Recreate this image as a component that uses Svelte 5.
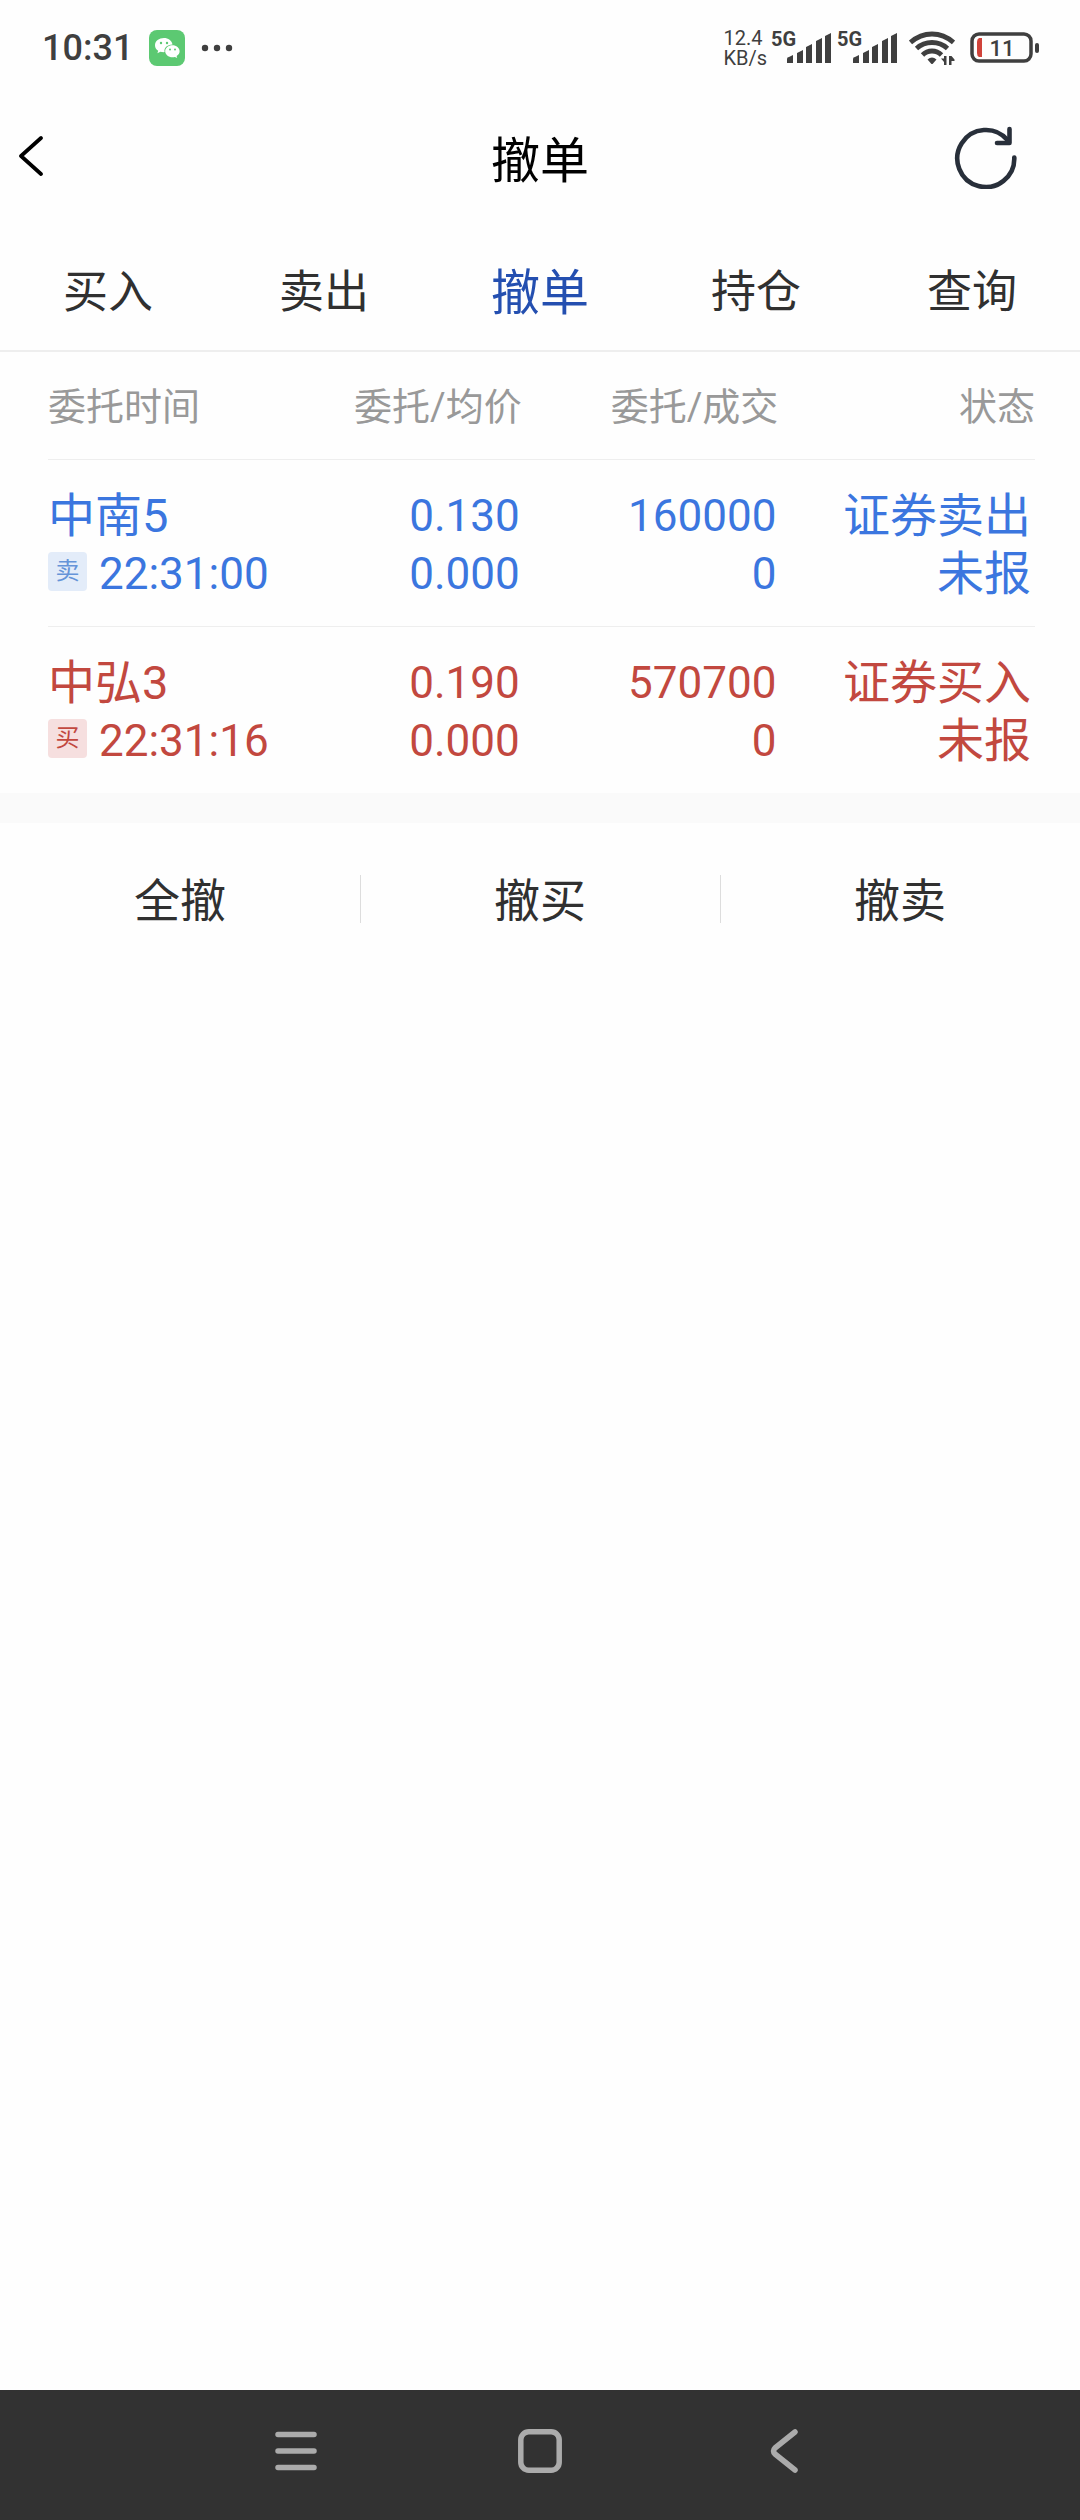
<script lang="ts">
  type Order = {
    name: string;
    side: 'buy' | 'sell';
    time: string;
    price: string;
    avgPrice: string;
    amount: number;
    filled: number;
    kind: string;
    status: string;
  };

  const tabs = ['买入', '卖出', '撤单', '持仓', '查询'];
  let activeTab = $state('撤单');

  const actions = ['全撤', '撤买', '撤卖'];

  const orders: Order[] = [
    {
      name: '中南5',
      side: 'sell',
      time: '22:31:00',
      price: '0.130',
      avgPrice: '0.000',
      amount: 160000,
      filled: 0,
      kind: '证券卖出',
      status: '未报'
    },
    {
      name: '中弘3',
      side: 'buy',
      time: '22:31:16',
      price: '0.190',
      avgPrice: '0.000',
      amount: 570700,
      filled: 0,
      kind: '证券买入',
      status: '未报'
    }
  ];
</script>

{#snippet signal()}
  <svg class="signal" width="62" height="46" viewBox="0 -6 62 46">
    <text x="0" y="15">5G</text>
    <path d="M16 32v-4q0-2 2-2l4-2v8zM26 32V22l6-3v13zM35 32V16l6-3v19zM45 32V10l6-3v25zM54 32V5l6-3v30z" />
  </svg>
{/snippet}

<div class="app">
  <!-- Status bar -->
  <div class="status-bar">
    <div class="status-left">
      <span class="clock">10:31</span>
      <svg width="36" height="36" viewBox="0 0 36 36">
        <rect width="36" height="36" rx="8" fill="#5cc972" />
        <path fill="#fff" d="M15 8c-5 0-9 3.100-9 7.200 0 2.300 1.200 4.200 3.200 5.500l-.8 2.500 3-1.500c1.400.4 2.800.5 4.200.4-1-4 2.500-7.700 7.900-7.700C22.800 10.500 19.200 8 15 8z" />
        <path fill="#fff" d="M23.400 15.300c-4 0-7.200 2.700-7.200 6s3.200 6 7.200 6c.9 0 1.700-.1 2.500-.4l2.300 1.200-.6-2c1.900-1.100 3-2.900 3-4.800 0-3.300-3.200-6-7.200-6z" />
        <g fill="#5cc972">
          <circle cx="12" cy="13" r="1.200" />
          <circle cx="18" cy="13" r="1.200" />
          <circle cx="21" cy="19.400" r="1" />
          <circle cx="26" cy="19.400" r="1" />
        </g>
      </svg>
      <svg width="32" height="8" viewBox="0 0 32 8" fill="#3f3f3f">
        <circle cx="4" cy="4" r="3.200" />
        <circle cx="16" cy="4" r="3.200" />
        <circle cx="28" cy="4" r="3.200" />
      </svg>
    </div>
    <div class="status-right">
      <div class="speed">
        <span>12.4</span>
        <span>KB/s</span>
      </div>
      {@render signal()}
      {@render signal()}
      <svg class="wifi" width="46" height="34" viewBox="0 0 46 34">
        <g fill="none" stroke="#3f3f3f" stroke-width="4.800">
          <path d="M1.500 11.500Q11 3 23 3t21.500 8.500" />
          <path d="M7.500 17.500Q14 11.500 23 11.500t15.500 6" />
          <path d="M13.500 24Q17.500 20 23 20t9.500 4" />
        </g>
        <path fill="#3f3f3f" d="M18.500 28.500q4.500-4 9 0L24 32.500q-1 1-2 0z" />
        <path fill="#3f3f3f" d="M35 25h2.500v9H35v-3l-3-3.500h3zM40 34v-9h2.500l3 3.500v1.500h-3v4z" />
      </svg>
      <svg class="battery" width="70" height="32" viewBox="0 0 70 32">
        <rect x="2" y="2" width="59" height="27" rx="7" fill="none" stroke="#3f3f3f" stroke-width="3.500" />
        <path fill="#d0433a" d="M12 6v19H9q-2-1-2-4V10q0-3 2-4z" />
        <rect x="65" y="11" width="4" height="10" rx="2" fill="#3f3f3f" />
        <text x="32" y="24" text-anchor="middle">11</text>
      </svg>
    </div>
  </div>

  <!-- Title bar -->
  <header class="title-bar">
    <button class="icon-btn" aria-label="返回">
      <svg width="26" height="42" viewBox="0 0 26 42">
        <path d="M23 2 3 20l20 18" fill="none" stroke="#000" stroke-width="3.700" stroke-linecap="round" stroke-linejoin="round" />
      </svg>
    </button>
    <h1>撤单</h1>
    <button class="icon-btn" aria-label="刷新">
      <svg width="64" height="64" viewBox="0 0 64 64">
        <g fill="none" stroke="#282f3a" stroke-width="4.600" stroke-linecap="round" stroke-linejoin="round">
          <path d="M60.300 32.500A28.500 28.500 0 1 1 53.500 15" />
          <path d="M55.500 4v14H43" />
        </g>
      </svg>
    </button>
  </header>

  <nav class="tabs">
    {#each tabs as tab}
      <button class="tab" class:active={tab === activeTab} onclick={() => (activeTab = tab)}>
        {tab}
      </button>
    {/each}
  </nav>

  <!-- Orders -->
  <main>
    <table class="orders">
      <thead>
        <tr>
          <th class="col-time">委托时间</th>
          <th class="col-price">委托/均价</th>
          <th class="col-amount">委托/成交</th>
          <th class="col-status">状态</th>
        </tr>
      </thead>
      <tbody>
        {#each orders as order}
          <tr class={order.side}>
            <td>
              <div class="line">{order.name}</div>
              <div class="line time">
                <span class="badge">{order.side === 'sell' ? '卖' : '买'}</span>
                <span>{order.time}</span>
              </div>
            </td>
            <td class="number">
              <div class="line">{order.price}</div>
              <div class="line">{order.avgPrice}</div>
            </td>
            <td class="number">
              <div class="line">{order.amount}</div>
              <div class="line">{order.filled}</div>
            </td>
            <td>
              <div class="line">{order.kind}</div>
              <div class="line">{order.status}</div>
            </td>
          </tr>
        {/each}
      </tbody>
    </table>

    <div class="actions">
      {#each actions as action}
        <button class="action">{action}</button>
      {/each}
    </div>
  </main>

  <!-- System navigation -->
  <footer class="system-nav">
    <button class="icon-btn" aria-label="最近任务">
      <svg width="44" height="44" viewBox="0 0 44 44">
        <path d="M4 5.500h36M4 22h36M4 38.500h36" stroke="#ababab" stroke-width="5.500" stroke-linecap="round" />
      </svg>
    </button>
    <button class="icon-btn" aria-label="主屏幕">
      <svg width="44" height="44" viewBox="0 0 44 44">
        <rect x="2.800" y="2.800" width="38.400" height="38.400" rx="8" fill="none" stroke="#ababab" stroke-width="5.500" />
      </svg>
    </button>
    <button class="icon-btn" aria-label="返回上一页">
      <svg width="44" height="44" viewBox="0 0 44 44">
        <path d="M33 3 13 19q-3 3 0 6l20 16" fill="none" stroke="#ababab" stroke-width="5.500" stroke-linecap="round" stroke-linejoin="round" />
      </svg>
    </button>
  </footer>
</div>

<style>
  :global(body) {
    background: #fefefe;
  }

  .app {
    display: flex;
    flex-direction: column;
    min-height: 100vh;
    font-family: Roboto, 'Noto Sans CJK SC', sans-serif;
    color: #303030;
  }

  button {
    padding: 0;
    border: none;
    background: none;
    font-family: inherit;
    color: inherit;
    cursor: pointer;
  }

  svg {
    display: block;
    flex-shrink: 0;
  }

  /* Status bar */
  .status-bar {
    display: flex;
    justify-content: space-between;
    align-items: center;
    height: 96px;
    padding: 0 40px 0 42px;
    color: #3f3f3f;
  }

  .status-left {
    display: flex;
    align-items: center;
    gap: 16px;
  }

  .clock {
    font-size: 36px;
    font-weight: 500;
  }

  .status-right {
    display: flex;
    align-items: center;
    gap: 4px;
  }

  .speed {
    display: flex;
    flex-direction: column;
    font-size: 20px;
    line-height: 20px;
  }

  .signal {
    fill: #3f3f3f;
    font-size: 20px;
    font-weight: 700;
  }

  .wifi {
    margin-left: 6px;
  }

  .battery {
    margin-left: 11px;
    fill: #3f3f3f;
    font-size: 22px;
    font-weight: 500;
  }

  /* Title bar */
  .title-bar {
    display: grid;
    grid-template-columns: 1fr auto 1fr;
    align-items: center;
    height: 122px;
    padding: 0 62px 0 18px;
  }

  .title-bar .icon-btn {
    justify-self: start;
  }

  .title-bar .icon-btn:last-child {
    justify-self: end;
  }

  h1 {
    margin: 0 0 0 44px;
    padding-top: 10px;
    font-size: 49px;
    font-weight: 400;
    line-height: 64px;
    color: #000;
  }

  /* Tabs */
  .tabs {
    display: flex;
    padding-top: 8px;
    border-bottom: 2px solid #eee;
  }

  .tab {
    flex: 1;
    height: 124px;
    font-size: 45px;
  }

  .tab.active {
    font-size: 49px;
    color: #244fb0;
  }

  /* Orders table */
  main {
    flex: 1;
  }

  .orders {
    width: calc(100% - 93px);
    margin: 0 45px 0 48px;
    border-collapse: collapse;
    table-layout: fixed;
  }

  th,
  td {
    padding: 0;
    text-align: right;
    white-space: nowrap;
  }

  th:first-child,
  td:first-child {
    text-align: left;
  }

  th {
    height: 103px;
    padding-bottom: 4px;
    font-size: 38px;
    font-weight: 400;
    color: #999;
  }

  td {
    padding: 27px 2px 23px 0;
    border-top: 1px solid #eee;
    font-size: 47px;
  }

  td:last-child {
    padding-right: 4px;
  }

  .col-time {
    width: 28%;
  }

  .col-price {
    width: 20%;
  }

  .col-amount,
  .col-status {
    width: 26%;
  }

  .line {
    height: 58px;
    line-height: 58px;
  }

  .number {
    font-size: 44px;
  }

  .time {
    display: flex;
    align-items: center;
    gap: 12px;
    font-size: 44px;
  }

  .badge {
    width: 39px;
    height: 39px;
    margin-bottom: 6px;
    border-radius: 4px;
    font-size: 24px;
    line-height: 39px;
    text-align: center;
  }

  .sell {
    color: #3b76df;
  }

  .sell .badge {
    background: #e3ecf9;
    color: #6594d8;
  }

  .buy {
    color: #c2483f;
  }

  .buy .badge {
    background: #f6dfdf;
  }

  /* Bottom actions */
  .actions {
    display: flex;
    align-items: center;
    padding: 40px 0;
    border-top: 30px solid #fafafa;
  }

  .action {
    flex: 1;
    height: 72px;
    padding-top: 4px;
    font-size: 46px;
    line-height: 48px;
  }

  .action + .action {
    background: linear-gradient(#ddd, #ddd) left center / 1px 48px no-repeat;
  }

  /* System navigation */
  .system-nav {
    display: flex;
    justify-content: center;
    align-items: center;
    gap: 200px;
    box-sizing: border-box;
    height: 130px;
    padding-bottom: 8px;
    background: #323232;
  }
</style>
